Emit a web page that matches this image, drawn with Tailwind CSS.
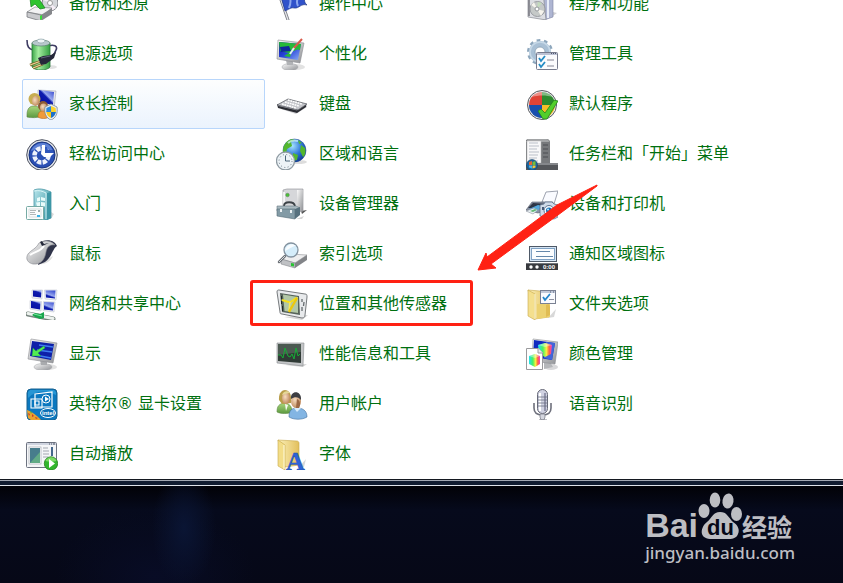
<!DOCTYPE html>
<html lang="zh-CN">
  <head>
    <meta charset="UTF-8" />
    <meta name="viewport" content="width=device-width, initial-scale=1.0" />
    <script src="https://cdn.jsdelivr.net/npm/@tailwindcss/browser@4"></script>
    <title>控制面板</title>
  </head>
  <body class="flex min-h-screen flex-col overflow-hidden bg-[#05060f] font-['DejaVu_Sans','Noto_Sans_CJK_SC',sans-serif]">
    <!-- shared gradients -->
    <svg class="absolute size-0" aria-hidden="true">
      <defs>
        <linearGradient id="silver" x1="0" y1="0" x2="1" y2="1">
          <stop offset="0" stop-color="#fafafa" /><stop offset="1" stop-color="#8e9094" />
        </linearGradient>
        <linearGradient id="screen" x1="0" y1="0" x2="1" y2="1">
          <stop offset="0" stop-color="#0a12a0" /><stop offset=".5" stop-color="#2a46dc" /><stop offset="1" stop-color="#8fb2f4" />
        </linearGradient>
        <linearGradient id="pane" x1="0" y1="1" x2="1" y2="0">
          <stop offset="0" stop-color="#0208a0" /><stop offset=".5" stop-color="#0e1cae" /><stop offset=".6" stop-color="#98a8ee" /><stop offset="1" stop-color="#2c40cc" />
        </linearGradient>
        <linearGradient id="green" x1="0" y1="0" x2="1" y2="0">
          <stop offset="0" stop-color="#3ba648" /><stop offset=".35" stop-color="#a4eda0" /><stop offset="1" stop-color="#34a042" />
        </linearGradient>
        <linearGradient id="folder" x1="0" y1="0" x2="1" y2="0">
          <stop offset="0" stop-color="#fbf0b8" /><stop offset="1" stop-color="#e2bf5c" />
        </linearGradient>
        <linearGradient id="teal" x1="0" y1="0" x2="1" y2="1">
          <stop offset="0" stop-color="#b9e6ec" /><stop offset="1" stop-color="#2b8d9d" />
        </linearGradient>
        <linearGradient id="rainbow" x1="0" y1="0" x2="1" y2="0">
          <stop offset="0" stop-color="#22e0f0" /><stop offset=".35" stop-color="#48f060" /><stop offset=".6" stop-color="#f8f040" /><stop offset=".8" stop-color="#ff6040" /><stop offset="1" stop-color="#f040d0" />
        </linearGradient>
        <radialGradient id="ball" cx=".4" cy=".3" r=".8">
          <stop offset="0" stop-color="#a8e4ff" /><stop offset=".5" stop-color="#2f78d8" /><stop offset="1" stop-color="#0b2c88" />
        </radialGradient>
        <radialGradient id="skin" cx=".4" cy=".4" r=".7">
          <stop offset="0" stop-color="#f6dcc0" /><stop offset="1" stop-color="#b98052" />
        </radialGradient>
        <linearGradient id="leaf" x1="0" y1="0" x2="0" y2="1">
          <stop offset="0" stop-color="#a9d67c" /><stop offset="1" stop-color="#5c9a40" />
        </linearGradient>
      </defs>
    </svg>

    <main class="relative overflow-hidden bg-white">
      <nav
        class="-mt-[21px] grid grid-flow-col grid-cols-[repeat(3,243px)] grid-rows-[repeat(10,50px)] gap-x-[7px] pl-[22px] text-base whitespace-nowrap text-[#00700f]"
        aria-label="控制面板项目"
      >
        <!-- column 1 -->
        <a href="#" class="flex items-center gap-[11px] px-1">
          <svg class="size-8" viewBox="0 0 32 32" aria-hidden="true">
            <circle cx="24" cy="15" r="8" fill="#d4d6da" stroke="#85878c" />
            <path d="M24 15l-7-3 2-4zM24 15l6 5-5 3z" fill="#f6eef6" />
            <circle cx="24" cy="15" r="2.5" fill="#fff" stroke="#999" />
            <path d="M1 24l8-5 17 1-8 7z" fill="#f2f2f3" stroke="#88898d" stroke-width=".7" />
            <path d="M1 24l14 3v6L1 29z" fill="#c9cacd" stroke="#6c6e73" stroke-width=".7" />
            <path d="M15 27l11-7v6l-11 7z" fill="#85878b" />
            <path d="M14 28l2-1v4l-2 1z" fill="#36dc36" />
            <path d="M4 10l1 9 4-3 5 5 5-1-6-9z" fill="#2ec42e" stroke="#157c1a" stroke-width=".7" />
          </svg>
          备份和还原
        </a>
        <a href="#" class="flex items-center gap-[11px] px-1">
          <svg class="size-8" viewBox="0 0 32 32" aria-hidden="true">
            <ellipse cx="23" cy="29" rx="8" ry="2" fill="#e2e2e2" />
            <path d="M1 2c0 7 2 9 6 10M22 8c6-2 10 0 8 4-1 4-3 5-6 8" fill="none" stroke="#3f3d63" stroke-width="1.6" />
            <path d="M6 5h18v24c-3 4-15 4-18 0z" fill="url(#green)" stroke="#28763a" stroke-width=".8" />
            <ellipse cx="15" cy="5" rx="9" ry="3" fill="#b8c8cc" stroke="#5b7f73" stroke-width=".7" />
            <ellipse cx="15" cy="3" rx="4" ry="2" fill="#edf4f6" stroke="#8198a0" stroke-width=".6" />
            <path d="M4 27l11-4M7 30l10-4" stroke="#78622a" stroke-width="2.6" />
            <path d="M4 27l11-4M7 30l10-4" stroke="#f0d896" stroke-width="1.2" />
            <path d="M12 20l5-2 8-1 5-3-2 6-8 6-5 1z" fill="#26283a" />
            <path d="M15 20l9-2" stroke="#70738c" stroke-width=".8" />
          </svg>
          电源选项
        </a>
        <a
          href="#"
          class="flex items-center gap-[11px] rounded-[2px] border border-[#b8d6fb] bg-gradient-to-b from-[#fdfefe] to-[#ebf3fd] px-[3px]"
        >
          <svg class="size-8" viewBox="0 0 32 32" aria-hidden="true">
            <path d="M12 2l18 1-2 18-16-3z" fill="#e6e7ec" stroke="#a5a8b4" stroke-width=".6" />
            <path d="M13 2l15 2-1 13-14-3z" fill="url(#pane)" />
            <path d="M1 27c0-7 3-9 7-9s8 2 8 10c-4 2-11 2-15 1z" fill="url(#leaf)" stroke="#5b8443" stroke-width=".6" />
            <circle cx="8.500" cy="11" r="6" fill="#c7ad52" />
            <ellipse cx="9.500" cy="13" rx="3.500" ry="5" fill="url(#skin)" />
            <path d="M12 29c0-5 2-6 5-6s6 2 6 6c-3 2-8 2-11 0z" fill="#f09a3a" stroke="#b96c20" stroke-width=".6" />
            <circle cx="17" cy="18" r="5" fill="#8c5a34" />
            <ellipse cx="17.500" cy="19.500" rx="3.500" ry="4" fill="url(#skin)" />
            <path d="M25 16l6 3c1 6-1 11-6 13-5-2-7-7-6-13z" fill="#e9edf0" stroke="#798a94" stroke-width=".8" />
            <path d="M25 18v6h-4.800l.2-4z" fill="#2c88dc" />
            <path d="M25 18v6h5l-.4-4z" fill="#fbd42c" />
            <path d="M25 24v6c-3-1-4-3-4.800-6z" fill="#fbc820" />
            <path d="M25 24v6c3-1 4-3 5-6z" fill="#1c70c8" />
          </svg>
          家长控制
        </a>
        <a href="#" class="flex items-center gap-[11px] px-1">
          <svg class="size-8" viewBox="0 0 32 32" aria-hidden="true">
            <circle cx="16" cy="17" r="15.300" fill="#e2e4e9" stroke="#4c5260" stroke-width="1" />
            <circle cx="16" cy="17" r="13" fill="#2a4fb4" stroke="#18347e" />
            <path d="M5 13c3-9 18-12 22 0-7-3-15-3-22 0z" fill="#5d80d4" />
            <circle cx="15.500" cy="17.500" r="7" fill="none" stroke="#eef2fb" stroke-width="4.500" stroke-dasharray="4.300 1.200" />
            <path d="M15 9h6v7h-6zM21 12h6v5h-6z" fill="#2f56ba" />
            <path d="M16 7h3v8h9l-4 4h-6l-3-3z" fill="#fff" />
          </svg>
          轻松访问中心
        </a>
        <a href="#" class="flex items-center gap-[11px] px-1">
          <svg class="size-8" viewBox="0 0 32 32" aria-hidden="true">
            <path d="M25 31l3-5-3-2z" fill="#d9d9d9" />
            <path d="M8 2c5-2 10-1 17 2v26l-5 2-12-3z" fill="url(#teal)" stroke="#4696a4" stroke-width=".8" />
            <path d="M21 5l4-1v26l-4 2z" fill="#3d97a6" />
            <path d="M8 3c5-1 8 0 12 2v26" fill="none" stroke="#d8f4f6" />
            <path d="M11 10l3-1v4l-3 .500zM15 9l4 1v3l-4-.500zM10 14.500l4-.500v4l-3 .5zM15 14l4 .500v4l-4-.500z" fill="#e8fbfa" />
            <rect x=".5" y="18.500" width="17" height="13" rx="1" fill="#fbfdfd" stroke="#76aaa4" />
            <path d="M3 21h12v8H3z" fill="none" stroke="#d8dfdf" />
            <path d="M4 22.500h6M4 24.500h5M4 26.500h6" stroke="#9fa6a6" stroke-width=".8" />
            <path d="M12 22h2v2h-2z" fill="#9caead" /><path d="M11 27h3v2h-3z" fill="#38b4e8" />
          </svg>
          入门
        </a>
        <a href="#" class="flex items-center gap-[11px] px-1">
          <svg class="size-8" viewBox="0 0 32 32" aria-hidden="true">
            <path d="M13 26c6 1 12-3 14-8z" fill="#dedede" />
            <path d="M17 3c6-2 12 0 14 5-4 2-5 11-12 16l-7 3z" fill="#30344a" />
            <path d="M13 5c5-3 12-3 16 2-5-1-8 2-9 7-1 7-5 13-13 12C2 25-1 21 2 16c3-4 8-5 11-11z" fill="url(#silver)" stroke="#85878d" stroke-width=".6" />
            <path d="M4 17c5-4 10-3 14-9" fill="none" stroke="#fff" stroke-width="2" />
            <path d="M14 4l2-1 2 3 5-1-7 3z" fill="#24283a" />
          </svg>
          鼠标
        </a>
        <a href="#" class="flex items-center gap-[11px] px-1">
          <svg class="size-8" viewBox="0 0 32 32" aria-hidden="true">
            <path d="M6 2h10.500l-.5 9-10-1zM18.500 2H31l-1 10-11-1z" fill="#eef0f6" stroke="#b9becb" stroke-width=".5" />
            <path d="M7 2.500h8.500L15 9.500l-8-1zM19.500 2.500h10l-.5 8-9-1z" fill="url(#pane)" />
            <path d="M4 12.500l11.500 1-.5 9.500-11-2zM17.500 13.500l11.500.5-1 10-11-1.500z" fill="#eef0f6" stroke="#b9becb" stroke-width=".5" />
            <path d="M5 13l9.500 1-.5 7.500-9-1.500zM18 14l10 .5-1 8-9-1z" fill="url(#pane)" />
            <path d="M2 26l25 5" stroke="#77847e" stroke-width="5" stroke-linecap="round" />
            <path d="M2 25.500l25 5" stroke="#edf2ee" stroke-width="3" stroke-linecap="round" />
            <path d="M6 27l3-2 5 1 4-2v6l-4 1-5-2z" fill="#19a64d" /><path d="M8 26l8 2" stroke="#78e89c" />
          </svg>
          网络和共享中心
        </a>
        <a href="#" class="flex items-center gap-[11px] px-1">
          <svg class="size-8" viewBox="0 0 32 32" aria-hidden="true">
            <ellipse cx="22" cy="29" rx="9" ry="3" fill="#e2e2e2" />
            <ellipse cx="17" cy="29" rx="9" ry="3.500" fill="url(#silver)" stroke="#a1a3a6" stroke-width=".5" />
            <path d="M14 22h7v5h-6z" fill="#a9abae" />
            <path d="M5 1l26 4-4 20L2 21z" fill="url(#silver)" stroke="#8b8d92" stroke-width=".6" />
            <path d="M6 3l22 3-3 16-21-4z" fill="#0e20a8" />
            <path d="M13 7l14 2M11 12l15 2M9 17l16 3" stroke="#3f7cf0" stroke-width="1.300" />
            <path d="M6 18l1-8 3 3 8-5 1 2-7 5 3 3z" fill="#52ec52" stroke="#159c3a" stroke-width=".4" />
          </svg>
          显示
        </a>
        <a href="#" class="flex items-center gap-[11px] px-1">
          <svg class="size-8" viewBox="0 0 32 32" aria-hidden="true">
            <rect x="1" y="1" width="30" height="31" rx="4" fill="#0b78bf" stroke="#17608f" />
            <path d="M2 10c8-8 18-8 28-3V4l-2-2H4L2 4z" fill="#2796d4" />
            <path d="M1 22c3 1 10 5 14 10H5l-3-2z" fill="#e9a42c" />
            <path d="M2 25l2 1-1 2zM6 26l2 2-2 1zM9 29l3 1-2 1z" fill="#c93a28" /><path d="M4 23l2 1-1 2zM8 26l2 1" fill="#5aac3c" />
            <path d="M9 6l17-2v15H9z" fill="none" stroke="#fff" stroke-width="1.200" />
            <path d="M5 11h11v9H5zM9 13h4v4H9z" fill="none" stroke="#fff" stroke-width="1.100" />
            <circle cx="20" cy="11" r="4" fill="#0b78bf" stroke="#fff" /><path d="M19 8.500l4 2.500-4 2.500z" fill="#fff" />
            <ellipse cx="22" cy="25" rx="7.500" ry="4.500" fill="#0b6fb5" stroke="#fff" stroke-width="1" />
            <text x="16" y="27" fill="#fff" font-family="Liberation Sans" font-size="6" font-weight="700">intel</text>
          </svg>
          英特尔® 显卡设置
        </a>
        <a href="#" class="flex items-center gap-[11px] px-1">
          <svg class="size-8" viewBox="0 0 32 32" aria-hidden="true">
            <rect x=".5" y="4.500" width="30" height="25" rx="1" fill="#f5f6f8" stroke="#6d7380" />
            <path d="M1 5h29v2H1z" fill="#cfd4df" /><path d="M23 6h1M25 6h1M27 6h2" stroke="#505868" />
            <rect x="3" y="9" width="12" height="17" fill="#fff" stroke="#9ca2aa" stroke-width=".6" />
            <path d="M4 10h10v15H4z" fill="#477d8c" /><path d="M4 25L14 14v11z" fill="#62ab86" />
            <path d="M17 10h5M17 13h6M17 16h6M17 19h5" stroke="#a3a8b0" />
            <path d="M26 9v9" stroke="#44688c" stroke-width="2" /><path d="M26 19v4" stroke="#c4cad2" stroke-width="2" />
            <circle cx="25" cy="25.500" r="6.700" fill="#32b52c" stroke="#28801f" stroke-width=".8" />
            <path d="M19.500 23c2-5 9-5 11 0-3 1-8 1-11 0z" fill="#7cda64" /><path d="M23 21l6 4.500-6 4.500z" fill="#fff" />
          </svg>
          自动播放
        </a>

        <!-- column 2 -->
        <a href="#" class="flex items-center gap-[11px] px-1">
          <svg class="size-8" viewBox="0 0 32 32" aria-hidden="true">
            <path d="M3 6l9 26" stroke="#797b82" stroke-width="3" stroke-linecap="round" /><path d="M3 6l9 26" stroke="#e7e8ec" stroke-width="1.300" />
            <path d="M4 5c8-4 15 4 27-1-4 5-3 11 0 13-6-2-8 4-13 3-3-1-6 2-9 3z" fill="#3052ca" stroke="#203787" stroke-width=".7" />
            <path d="M12 7c3 3 3 8 1 13M23 8c-2 3-3 6-1 10" fill="none" stroke="#8ba6ef" stroke-width="2" />
          </svg>
          操作中心
        </a>
        <a href="#" class="flex items-center gap-[11px] px-1">
          <svg class="size-8" viewBox="0 0 32 32" aria-hidden="true">
            <ellipse cx="20" cy="29" rx="9" ry="3" fill="#e2e2e2" />
            <ellipse cx="14" cy="29" rx="8" ry="3.500" fill="url(#silver)" stroke="#a1a3a6" stroke-width=".5" />
            <path d="M10 22h7v5h-6z" fill="#b1b3b6" />
            <path d="M2 2l26 3-4 20L1 21z" fill="url(#silver)" stroke="#8b8d92" stroke-width=".6" />
            <path d="M3 4l22 2-3 16L3 19z" fill="url(#screen)" />
            <path d="M3 4l22 2-1 6c-4-2-5 2-8 1l-2 6-6-1 5-3-9-2z" fill="#26ba38" />
            <path d="M4 9l9-1 2 5-10 1z" fill="#10299c" />
            <path d="M26 1l-9 10" stroke="#d85a4b" stroke-width="2" /><path d="M18 10l-4 6" stroke="#e2eef8" stroke-width="2" />
          </svg>
          个性化
        </a>
        <a href="#" class="flex items-center gap-[11px] px-1">
          <svg class="size-8" viewBox="0 0 32 32" aria-hidden="true">
            <path d="M5 21l15 5 11-7v-3z" fill="#d0d0d3" />
            <path d="M1 16l20 5 9-5v3l-9 6L2 20z" fill="#2b2c32" />
            <path d="M1 17l11-6 19 5-9 6z" fill="#c4c5ca" stroke="#62646b" stroke-width=".8" />
            <path d="M6 16l14 4M9 14l14 4M12 12l14 4" stroke="#fff" stroke-width="1.500" stroke-dasharray="1.800 .7" />
            <path d="M2 17.500l19 4.500" stroke="#808289" />
          </svg>
          键盘
        </a>
        <a href="#" class="flex items-center gap-[11px] px-1">
          <svg class="size-8" viewBox="0 0 32 32" aria-hidden="true">
            <ellipse cx="22" cy="24" rx="9" ry="2" fill="#ddd" />
            <circle cx="18.500" cy="12.500" r="11.500" fill="url(#ball)" stroke="#23488e" stroke-width=".5" />
            <path d="M9 6c4-6 8-5 10-4l-4 2 1 4-5 3-1 5-3-2c0-3 0-5 2-8zM25 7l4 3c1 4 0 8-2 9l-3-6zM17 15l5 2-1 5-4 1zM22 2l4 3-3 1z" fill="#53b72e" />
            <path d="M12 5c3-3 6-3 10-2" stroke="#d8f8ff" stroke-width="2" fill="none" opacity=".7" />
            <circle cx="9.500" cy="23" r="9" fill="#edf3f7" stroke="#8f9ba3" stroke-width="1.300" />
            <circle cx="9.500" cy="23" r="6.500" fill="none" stroke="#6b7b88" stroke-dasharray="1 2.400" />
            <path d="M9.500 17.500V23H14" fill="none" stroke="#4b6578" />
          </svg>
          区域和语言
        </a>
        <a href="#" class="flex items-center gap-[11px] px-1">
          <svg class="size-8" viewBox="0 0 32 32" aria-hidden="true">
            <path d="M25 23l6-1-5 4z" fill="#555" />
            <path d="M7 2l4-1h16v22l-4 1H7z" fill="#d6d7da" stroke="#8a8c91" stroke-width=".6" />
            <path d="M21 2h6v21l-6 1z" fill="url(#silver)" /><path d="M8 4v17" stroke="#fff" stroke-width="1.500" />
            <circle cx="11.500" cy="7" r="1.800" fill="#4ac234" stroke="#5f7861" stroke-width=".5" />
            <path d="M20 31h6l2-3z" fill="#d5d5d5" />
            <path d="M8 18c0-5 10-5 11 0" fill="none" stroke="#3d4348" stroke-width="1.800" />
            <path d="M1 18h19l4 2-5 3H1z" fill="#a9bac1" stroke="#65777f" stroke-width=".6" />
            <path d="M1 21h18v10L1 28z" fill="#839ba6" stroke="#546c77" stroke-width=".6" /><path d="M19 21l5-2v8l-5 4z" fill="#57717e" />
            <path d="M5 21v3M15 22v3" stroke="#eef3f5" stroke-width="2" />
          </svg>
          设备管理器
        </a>
        <a href="#" class="flex items-center gap-[11px] px-1">
          <svg class="size-8" viewBox="0 0 32 32" aria-hidden="true">
            <path d="M5 21l8-5 18 1-12 8z" fill="#eeeeef" stroke="#8e9095" stroke-width=".6" />
            <path d="M5 21l14 4v5L5 26z" fill="#bfc1c4" stroke="#777a7e" stroke-width=".5" /><path d="M19 25l12-8v5l-12 8z" fill="#828488" />
            <path d="M15 25l3 .5v3l-3-.5z" fill="#27c431" />
            <path d="M9 18l-6 6" stroke="#6c7177" stroke-width="2.500" stroke-linecap="round" /><path d="M9 18l-6 6" stroke="#d6dadc" />
            <circle cx="15" cy="12" r="7" fill="#d5edfa" stroke="#8493a0" stroke-width="1.300" />
            <path d="M9 13c1-6 7-9 11-5-3 0-5 2-11 5z" fill="#f7fcff" />
          </svg>
          索引选项
        </a>
        <a href="#" class="relative flex items-center gap-[11px] px-1">
          <svg class="size-8" viewBox="0 0 32 32" aria-hidden="true">
            <path d="M8 29l18 3 6-5z" fill="#d7d7d7" />
            <path d="M1 4c0-2 1-2 2-2l26 4c2 0 2 1 2 3l-2 18c0 2-1 3-3 3L6 26c-2 0-2-1-2-2z" fill="#e8eaec" stroke="#767a7d" stroke-width="1" />
            <path d="M4 5l19 3 1 19-18-3z" fill="#56635a" /><path d="M7 6.500l15 2.500v16L8.500 23z" fill="#b2c8a6" />
            <path d="M6 12l8 2.500 7-5" fill="none" stroke="#f7df18" stroke-width="2" />
            <path d="M14 14l-1 9" fill="none" stroke="#f7e858" stroke-width="1.600" />
            <path d="M13 24l8-14" stroke="#ecc90c" stroke-width="2.400" />
            <path d="M26 11v3M26 19v4M28 14l-.5 4" stroke="#656b6e" stroke-width="1.300" />
            <path d="M5.500 8v3M5.500 13v3M6.500 18v5" stroke="#202a23" />
          </svg>
          位置和其他传感器
          <span class="absolute top-[1px] -left-[22px] h-[46px] w-[223px] rounded-[3px] border-3 border-[#ff2113]"></span>
        </a>
        <a href="#" class="flex items-center gap-[11px] px-1">
          <svg class="size-8" viewBox="0 0 32 32" aria-hidden="true">
            <path d="M9 27l18 2 4-3z" fill="#d7d7d7" />
            <path d="M1 5h27l-1 23L1 25z" fill="#c3c5c7" stroke="#888b8e" stroke-width=".6" />
            <path d="M2 6h23v19L2 23z" fill="#303b36" /><path d="M2 6h23v8L2 17z" fill="#4b5951" />
            <path d="M2 17h3l2 3 2-10 3 8 2 1 2-3 2 5 2-11 2 8 2-2" fill="none" stroke="#17ac36" stroke-width="1" />
          </svg>
          性能信息和工具
        </a>
        <a href="#" class="flex items-center gap-[11px] px-1">
          <svg class="size-8" viewBox="0 0 32 32" aria-hidden="true">
            <path d="M1 24c0-6 2-8 7-9 5 0 8 3 8 9-4 2-11 2-15 0z" fill="url(#leaf)" stroke="#5c8843" stroke-width=".6" />
            <path d="M3 12c-1-13 12-13 12-2v5l-9 1z" fill="#b99d4a" />
            <ellipse cx="10" cy="10" rx="4" ry="6" fill="url(#skin)" /><path d="M6 7c1-4 6-5 8-2-3 0-5 1-8 2z" fill="#e5d798" />
            <path d="M9 16l3 1-2 6z" fill="#f8faf2" />
            <path d="M13 29c0-7 3-9 8-9s10 2 10 9c-5 3-13 3-18 0z" fill="#83b5e3" stroke="#43709f" stroke-width=".6" />
            <path d="M18 20l3 4 4-4" fill="#d9ecfa" />
            <ellipse cx="20" cy="13" rx="5" ry="7" fill="url(#skin)" /><path d="M15 11c-1-9 11-9 10 1-2-3-6-4-10-1z" fill="#3e3f43" />
            <path d="M21 11c3 1 4 6 2 9h-3z" fill="#9b6744" />
          </svg>
          用户帐户
        </a>
        <a href="#" class="flex items-center gap-[11px] px-1">
          <svg class="size-8" viewBox="0 0 32 32" aria-hidden="true">
            <path d="M22 30l8-9-2 8z" fill="#d8d8d8" />
            <path d="M2 2l19 1c1 0 2 1 2 2v22l-14 2z" fill="url(#folder)" stroke="#c6a74c" stroke-width=".6" />
            <path d="M2 2l7 5v25l-7-4z" fill="#f3dd88" stroke="#c6a74c" stroke-width=".6" /><path d="M8 7v24" stroke="#fffbe1" />
            <text x="10" y="32" fill="#2d64d8" stroke="#204899" stroke-width=".4" font-family="Liberation Serif" font-size="26" font-weight="700">A</text>
          </svg>
          字体
        </a>

        <!-- column 3 -->
        <a href="#" class="flex items-center gap-[11px] px-1">
          <svg class="size-8" viewBox="0 0 32 32" aria-hidden="true">
            <path d="M24 30l7-5-4-1z" fill="#cfcfd2" />
            <path d="M17 5l10-1v25l-9 3z" fill="#aeb5d2" stroke="#7d83a1" stroke-width=".6" /><path d="M22 5v25" stroke="#e8edf8" stroke-width="2" />
            <path d="M2 5l15-1 3 28L2 29z" fill="#dcdee3" stroke="#868992" stroke-width=".7" />
            <path d="M3 7v21" stroke="#75757c" stroke-width="1.500" />
            <circle cx="11.500" cy="21" r="7.500" fill="#c5c9c8" stroke="#999ca1" /><path d="M11 21l-6-4 3-3zM11 21l7 2-3 5z" fill="#f6f4ed" /><path d="M11 21l1-7 4 1z" fill="#c3dbbc" />
            <circle cx="11" cy="21" r="2" fill="#fff" stroke="#93979b" />
          </svg>
          程序和功能
        </a>
        <a href="#" class="flex items-center gap-[11px] px-1">
          <svg class="size-8" viewBox="0 0 32 32" aria-hidden="true">
            <circle cx="14" cy="14" r="11.500" fill="none" stroke="#8da6bc" stroke-width="3" stroke-dasharray="3.600 3.624" />
            <circle cx="14" cy="14" r="8" fill="none" stroke="#a9c0d5" stroke-width="6" />
            <circle cx="14" cy="14" r="10" fill="none" stroke="#c6d8e7" stroke-width="1.500" /><circle cx="14" cy="14" r="5" fill="#fff" stroke="#8099af" stroke-width=".8" />
            <rect x="10.500" y="14.500" width="21" height="17" rx="1" fill="#fbfbfd" stroke="#777b8d" />
            <path d="M11 15h20v2H11z" fill="#bcc2d4" /><path d="M25 15.500h1M27 15.500h1M29 15.500h1" stroke="#50576c" />
            <path d="M13 20l2 3 4-5M13 26l2 3 4-5" fill="none" stroke="#248bc4" stroke-width="1.800" /><path d="M21 22h7M21 28h7" stroke="#858695" />
          </svg>
          管理工具
        </a>
        <a href="#" class="flex items-center gap-[11px] px-1">
          <svg class="size-8" viewBox="0 0 32 32" aria-hidden="true">
            <circle cx="16" cy="17" r="14.500" fill="#e9eaec" stroke="#595b60" />
            <path d="M16 17V4A13 13 0 0 0 3 17z" fill="#e04336" /><path d="M16 17V4a13 13 0 0 1 13 13z" fill="#2d8b2e" />
            <path d="M16 17H3a13 13 0 0 0 13 13z" fill="#184eae" /><path d="M16 17h13a13 13 0 0 1-13 13z" fill="#f8bd27" />
            <path d="M6 9c5-7 15-7 20 0-5-2-14-2-20 0z" fill="#fff" opacity=".4" />
            <path d="M12 23l3-2 4 4 9-13 4 1-11 18h-4z" fill="#53cf2b" stroke="#23831d" stroke-width=".8" />
          </svg>
          默认程序
        </a>
        <a href="#" class="flex items-center gap-[11px] px-1">
          <svg class="size-8" viewBox="0 0 32 32" aria-hidden="true">
            <path d="M0 2l2-1h18c3 0 4 1 4 4v21H0z" fill="#77797c" /><path d="M2 1h18c2 0 3 1 3 3H0z" fill="#a2a4a6" />
            <path d="M1 3h14v22H1z" fill="#f8f8f9" stroke="#bbb" stroke-width=".5" />
            <path d="M3 5h9M3 8h10M3 11h8M3 14h10M3 17h9M3 20h8M3 23h9" stroke="#babfc8" />
            <path d="M17 7h5M17 11h5M17 15h5M17 19h5" stroke="#4d4f53" />
            <path d="M0 25h32v7H0z" fill="#55575b" /><path d="M0 25h32v2H0z" fill="#85878b" />
            <circle cx="6" cy="27" r="5.500" fill="#1b659e" stroke="#174267" stroke-width=".6" />
            <path d="M3 24l3-1v4H3z" fill="#e66432" /><path d="M6.500 24l3-1v4h-3z" fill="#76bd37" /><path d="M3 27.500h3v3l-3-1z" fill="#51b5e5" /><path d="M6.500 27.500h3v2l-3 1z" fill="#fac933" />
          </svg>
          任务栏和「开始」菜单
        </a>
        <a href="#" class="flex items-center gap-[11px] px-1">
          <svg class="size-8" viewBox="0 0 32 32" aria-hidden="true">
            <path d="M16 14l4-10 12-1-4 13z" fill="#fafbff" stroke="#858c9b" stroke-width=".8" />
            <path d="M6 14h21v6l-15 5-12-3z" fill="#8a92a3" stroke="#525a6a" stroke-width=".6" />
            <path d="M7 15l16 1-9 5-12-1z" fill="#2d3545" /><path d="M3 21l9-4 5 1-7 6z" fill="#53a8dd" /><path d="M0 23l8-3 4 2-5 4z" fill="#e9f0f3" stroke="#7a8391" stroke-width=".5" />
            <path d="M4 23l5-2 2 1-4 2z" fill="#60b775" />
            <path d="M14 17l4-1 1-2h7l2 2 4 1v12l-4 2-14-3z" fill="#d0dbe9" stroke="#61718b" stroke-width=".8" />
            <circle cx="23" cy="22.500" r="5" fill="#f4f9ff" stroke="#60738e" /><circle cx="23" cy="22.500" r="3" fill="#1770b4" /><circle cx="22" cy="21.500" r="1" fill="#b6e8ff" />
            <path d="M16 19h2v3h-2z" fill="#465a78" />
          </svg>
          设备和打印机
        </a>
        <a href="#" class="flex items-center gap-[11px] px-1">
          <svg class="size-8" viewBox="0 0 32 32" aria-hidden="true">
            <rect x="3.500" y="8.500" width="27" height="15" fill="#d5e4f3" stroke="#4e5967" />
            <rect x="5.500" y="10.500" width="23" height="11" fill="#fbfdff" stroke="#80a2c4" />
            <path d="M10 13.500h14M10 18.500h17" stroke="#6487aa" />
            <path d="M0 25h32v8H0z" fill="#383a3e" /><path d="M0 25h32v1H0z" fill="#72757a" />
            <circle cx="5" cy="29" r="1.700" fill="#fff" /><circle cx="11" cy="29" r="1.700" fill="#fff" />
            <text x="17" y="31" fill="#fff" font-family="Liberation Sans" font-size="6" font-weight="700">0:00</text>
          </svg>
          通知区域图标
        </a>
        <a href="#" class="flex items-center gap-[11px] px-1">
          <svg class="size-8" viewBox="0 0 32 32" aria-hidden="true">
            <path d="M22 30l8-9-2 8z" fill="#d8d8d8" />
            <path d="M2 2l12 1 9 11v15L9 31z" fill="url(#folder)" stroke="#c6a74c" stroke-width=".6" />
            <path d="M11 16l13-1v14l-13 2z" fill="#ecd170" /><path d="M20 17c3-2 4 0 4 3v7l-4 2z" fill="#e0bc53" />
            <path d="M2 2l7 4v26l-7-4z" fill="#f4df8d" stroke="#c6a74c" stroke-width=".6" /><path d="M9 6v25" stroke="#fff9db" />
            <rect x="14.500" y="2.500" width="15" height="13" fill="#fafbfe" stroke="#7a8193" /><path d="M15 3h14v2H15z" fill="#c0c8d8" /><path d="M24 4h1M27 4h1" stroke="#515b75" />
            <path d="M17 9l2 3 5-6" fill="none" stroke="#2486cb" stroke-width="1.800" /><path d="M23 11.500h5" stroke="#8c90a0" />
          </svg>
          文件夹选项
        </a>
        <a href="#" class="flex items-center gap-[11px] px-1">
          <svg class="size-8" viewBox="0 0 32 32" aria-hidden="true">
            <ellipse cx="25" cy="29" rx="7" ry="3" fill="#d8d8da" />
            <path d="M18 24h6l3 5-9 2z" fill="#b5b7ba" />
            <path d="M7 1l25 3-3 22-23-3z" fill="url(#silver)" stroke="#8b8d92" stroke-width=".6" />
            <path d="M8 2l21 3-3 17-19-3z" fill="#102ac0" /><path d="M20 4l9 1-3 17-8-2z" fill="#4266d9" />
            <path d="M12 7l7-2 7 2-1 9-6 3-6-3z" fill="url(#rainbow)" /><path d="M12 7l7 2 7-2-7-2z" fill="#fff" opacity=".4" />
            <path d="M.5 10.500h12l4 4v17H.500z" fill="#fff" stroke="#9a9a9d" /><path d="M12 10v5h5" fill="#e9e9ec" stroke="#9a9a9d" />
            <path d="M3 18l6-2 5 2v8l-5 3-6-3z" fill="url(#rainbow)" /><path d="M3 18l6 2 5-2-5-2z" fill="#fff" opacity=".4" />
          </svg>
          颜色管理
        </a>
        <a href="#" class="flex items-center gap-[11px] px-1">
          <svg class="size-8" viewBox="0 0 32 32" aria-hidden="true">
            <path d="M8 15v5c0 5 4 7 8.500 7s8.500-2 8.500-7v-5" fill="none" stroke="#6e707c" stroke-width="1.600" />
            <path d="M14 26h5v3l-1 3h-3l-1-3z" fill="#d4d6df" stroke="#6e707c" stroke-width=".7" />
            <path d="M13 32h8" stroke="#888a93" />
            <rect x="11.500" y="1.500" width="10" height="24" rx="5" fill="#d0d2e2" stroke="#676977" />
            <path d="M14 5v18" stroke="#fff" stroke-width="2" /><path d="M19 5v18" stroke="#9395ac" stroke-width="2" />
            <path d="M11 9h11M11 12h11M11 15h11M11 18h11" stroke="#6b6e82" stroke-width=".8" />
          </svg>
          语音识别
        </a>
      </nav>

      <!-- pointer to the location item -->
      <svg class="absolute top-[184px] left-[477px] h-[88px] w-[122px]" viewBox="477 184 122 88" aria-hidden="true">
        <path d="M597 185L557 205 487 257 486 253 478 270 496 268 491 264 558 215 597 186z" fill="#ff2113" stroke="#ff2113" stroke-linejoin="round" />
      </svg>
    </main>

    <!-- window frame -->
    <div class="h-[7px] border-b border-[#dfe3ea] bg-[#111c30]">
      <div class="h-[2px] border-t border-[#141820] bg-[#a4a9b3]"></div>
    </div>

    <footer
      class="flex flex-1 justify-end bg-[radial-gradient(ellipse_32px_60px_at_184px_42px,#0a1534,transparent),radial-gradient(ellipse_100px_70px_at_155px_90px,#080c25,transparent),linear-gradient(to_bottom,#020207,#060a1c_24px,#060817)] pt-[6px] pr-12"
    >
      <div class="flex flex-col text-[#bdbec3]">
        <div class="flex h-[50px] items-end">
          <span class="font-['Liberation_Sans',sans-serif] text-[34px] leading-[34px] font-bold">Bai</span>
          <svg class="h-[50px] w-[44px]" viewBox="0 0 44 50" aria-hidden="true">
            <g fill="currentColor">
              <ellipse cx="6" cy="19" rx="5.500" ry="7" />
              <ellipse cx="17" cy="8" rx="5.300" ry="7.500" />
              <ellipse cx="30" cy="9" rx="5.500" ry="7.500" transform="rotate(10 30 9)" />
              <ellipse cx="38.500" cy="22" rx="5.500" ry="7" />
              <path d="M22 20c7 0 8 5 13 10 5 3 7 8 5 12-2 6-9 5-18 5-8 0-16 1-18-5-1-4 1-9 5-12 5-4 6-10 13-10z" />
            </g>
            <text x="9" y="43" fill="#060817" font-family="Liberation Sans" font-size="22" font-weight="700">du</text>
          </svg>
          <span class="font-['Noto_Sans_CJK_SC',sans-serif] text-[25px] leading-[32px] font-bold">经验</span>
        </div>
        <span class="font-['Noto_Sans',sans-serif] text-[17px] leading-[22px] font-medium">jingyan.baidu.com</span>
      </div>
    </footer>
  </body>
</html>
